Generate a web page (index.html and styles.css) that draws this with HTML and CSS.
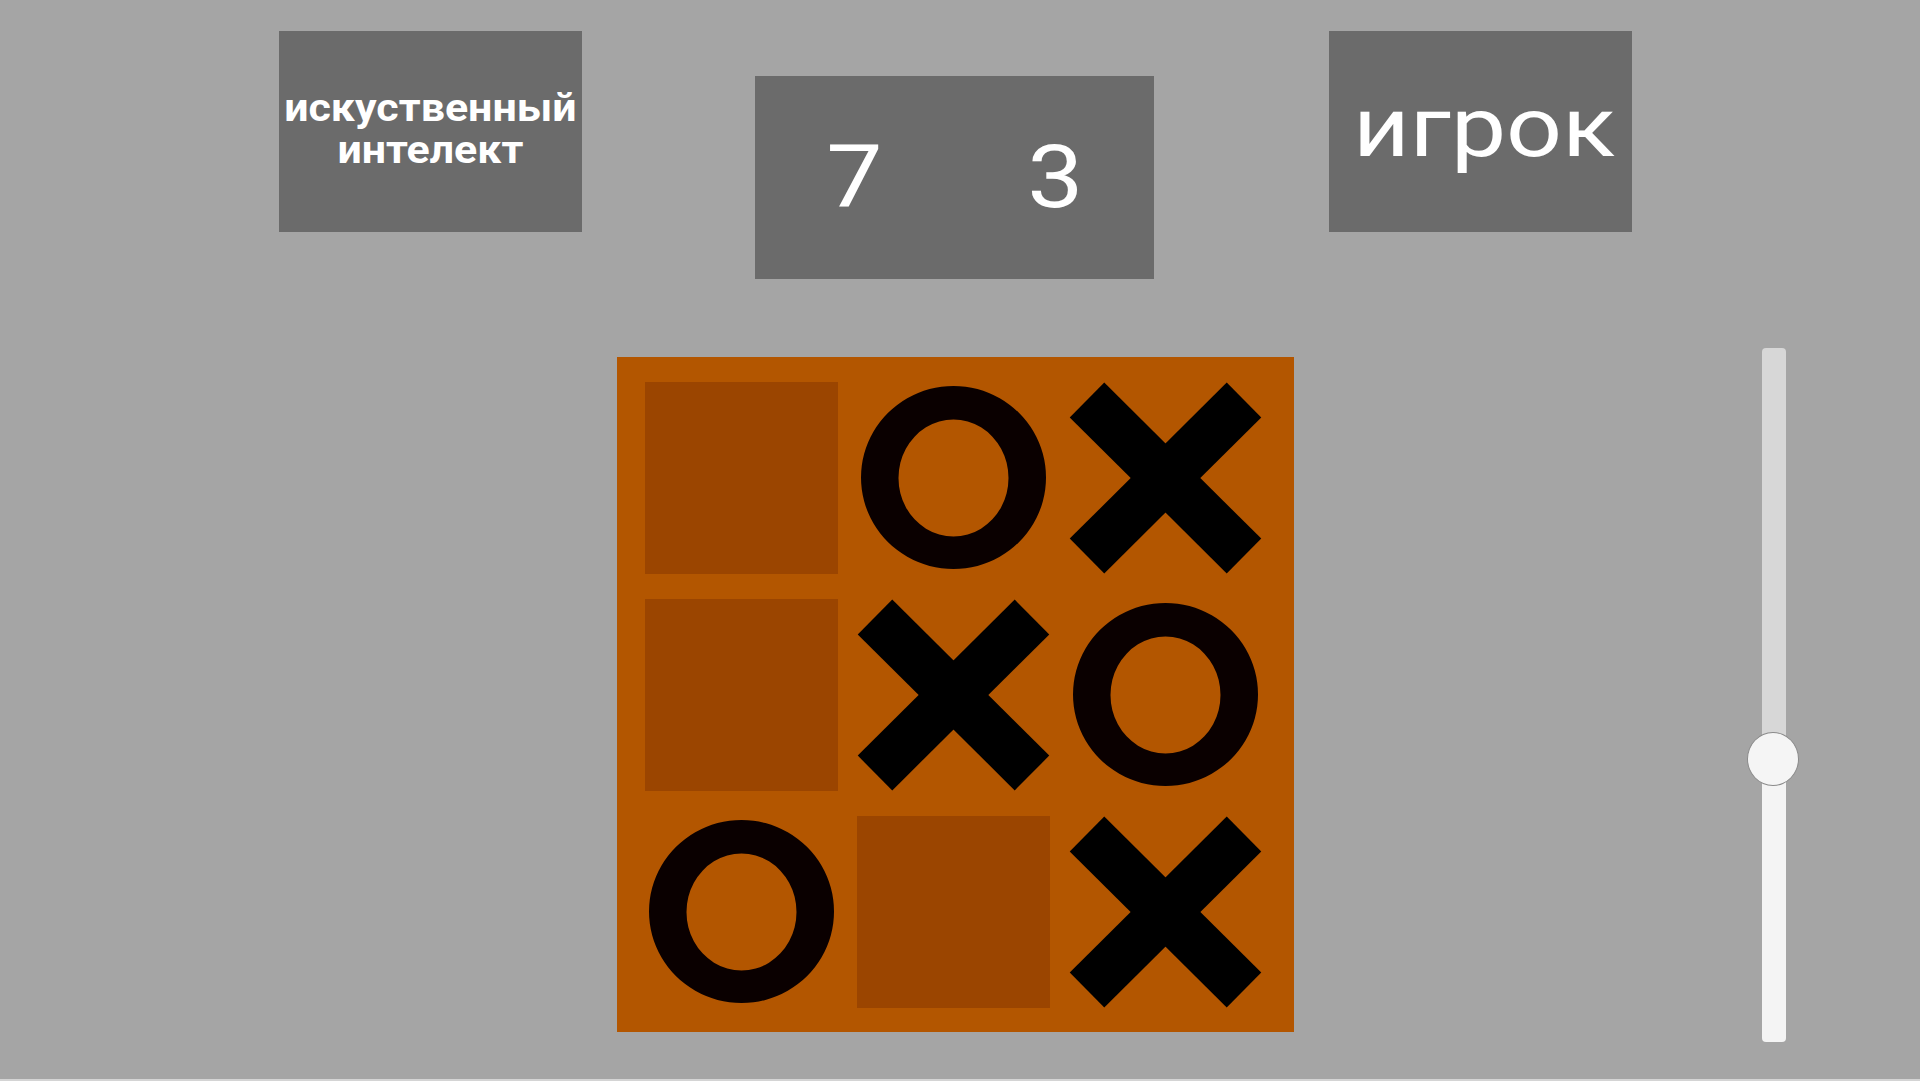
FILE: index.html
```html
<!DOCTYPE html>
<html lang="ru">
<head>
<meta charset="utf-8">
<title>Крестики-нолики</title>
<link rel="stylesheet" href="styles.css">
</head>
<body>
<div class="page">
  <header class="top">
    <div class="panel panel-ai"><span class="ai-text">искуственный<br>интелект</span></div>
    <div class="panel score"><span class="digit">7</span><span class="digit">3</span></div>
    <div class="panel panel-player"><span class="player-text">игрок</span></div>
  </header>
  <main class="main">
    <div class="board">
      <div class="cell empty"></div>
      <div class="cell"><svg class="mark" viewBox="0 0 193 192"><path class="o" d="M96.5 4a92.5 91.5 0 1 0 0.01 0Z M96.5 37.5a55 58.5 0 1 1 -0.01 0Z"/></svg></div>
      <div class="cell"><svg class="mark" viewBox="0 0 193 192"><line x1="18" y1="18" x2="175" y2="174" class="x"/><line x1="175" y1="18" x2="18" y2="174" class="x"/></svg></div>
      <div class="cell empty"></div>
      <div class="cell"><svg class="mark" viewBox="0 0 193 192"><line x1="18" y1="18" x2="175" y2="174" class="x"/><line x1="175" y1="18" x2="18" y2="174" class="x"/></svg></div>
      <div class="cell"><svg class="mark" viewBox="0 0 193 192"><path class="o" d="M96.5 4a92.5 91.5 0 1 0 0.01 0Z M96.5 37.5a55 58.5 0 1 1 -0.01 0Z"/></svg></div>
      <div class="cell"><svg class="mark" viewBox="0 0 193 192"><path class="o" d="M96.5 4a92.5 91.5 0 1 0 0.01 0Z M96.5 37.5a55 58.5 0 1 1 -0.01 0Z"/></svg></div>
      <div class="cell empty"></div>
      <div class="cell"><svg class="mark" viewBox="0 0 193 192"><line x1="18" y1="18" x2="175" y2="174" class="x"/><line x1="175" y1="18" x2="18" y2="174" class="x"/></svg></div>
    </div>
    <div class="slider">
      <div class="track-top"></div>
      <div class="track-bottom"></div>
      <div class="thumb"></div>
    </div>
  </main>
</div>
<div class="bottom-line"></div>
</body>
</html>
```
FILE: styles.css
```css
html, body {
  margin: 0;
  padding: 0;
}
body {
  background: #a5a5a5;
  width: 1920px;
  height: 1081px;
  overflow: hidden;
  font-family: Roboto, "Liberation Sans", Arial, sans-serif;
  color: #ffffff;
}
.page {
  height: 1079px;
}
.bottom-line {
  height: 2px;
  background: #d4d4d4;
}
.top {
  display: flex;
  align-items: flex-start;
  padding-left: 279px;
}
.panel {
  background: #6b6b6b;
  display: flex;
  align-items: center;
  justify-content: center;
}
.panel-ai {
  width: 303px;
  height: 201px;
  margin-top: 31px;
}
.ai-text {
  font-weight: bold;
  font-size: 38px;
  line-height: 42px;
  text-align: center;
  display: inline-block;
  transform: scaleX(1.13);
  margin-top: -6px;
}
.score {
  width: 399px;
  height: 203px;
  margin-top: 76px;
  margin-left: 173px;
  gap: 152px;
}
.digit {
  font-size: 87px;
  line-height: 1;
  display: inline-block;
  transform: scaleX(1.15);
}
.panel-player {
  width: 303px;
  height: 201px;
  margin-top: 31px;
  margin-left: 175px;
}
.player-text {
  font-size: 84px;
  line-height: 1;
  display: inline-block;
  transform: scaleX(1.17);
  margin-top: -8px;
  margin-left: 8px;
}
.main {
  display: flex;
  align-items: flex-start;
  padding-left: 617px;
  margin-top: 69px;
}
.board {
  margin-top: 9px;
  width: 677px;
  height: 675px;
  box-sizing: border-box;
  padding: 25px 0 0 28px;
  background: #b35600;
  display: grid;
  grid-template-columns: repeat(3, 193px);
  grid-template-rows: repeat(3, 192px);
  column-gap: 19px;
  row-gap: 25px;
}
.cell {
  width: 193px;
  height: 192px;
}
.cell.empty {
  background: #9b4500;
}
.mark {
  display: block;
  width: 193px;
  height: 192px;
}
.x {
  stroke: #000000;
  stroke-width: 49;
}
.o {
  fill: #0a0000;
  fill-rule: evenodd;
}
.slider {
  position: relative;
  width: 24px;
  height: 694px;
  margin-left: 468px;
  display: flex;
  flex-direction: column;
}
.track-top {
  height: 411px;
  background: #d7d7d7;
  border-radius: 4px 4px 0 0;
}
.track-bottom {
  flex: 1;
  background: #f4f4f4;
  border-radius: 0 0 4px 4px;
}
.thumb {
  position: absolute;
  left: -15px;
  top: 384px;
  width: 50px;
  height: 52px;
  border-radius: 50%;
  background: #f5f5f5;
  border: 1px solid #8a8a8a;
}
```
